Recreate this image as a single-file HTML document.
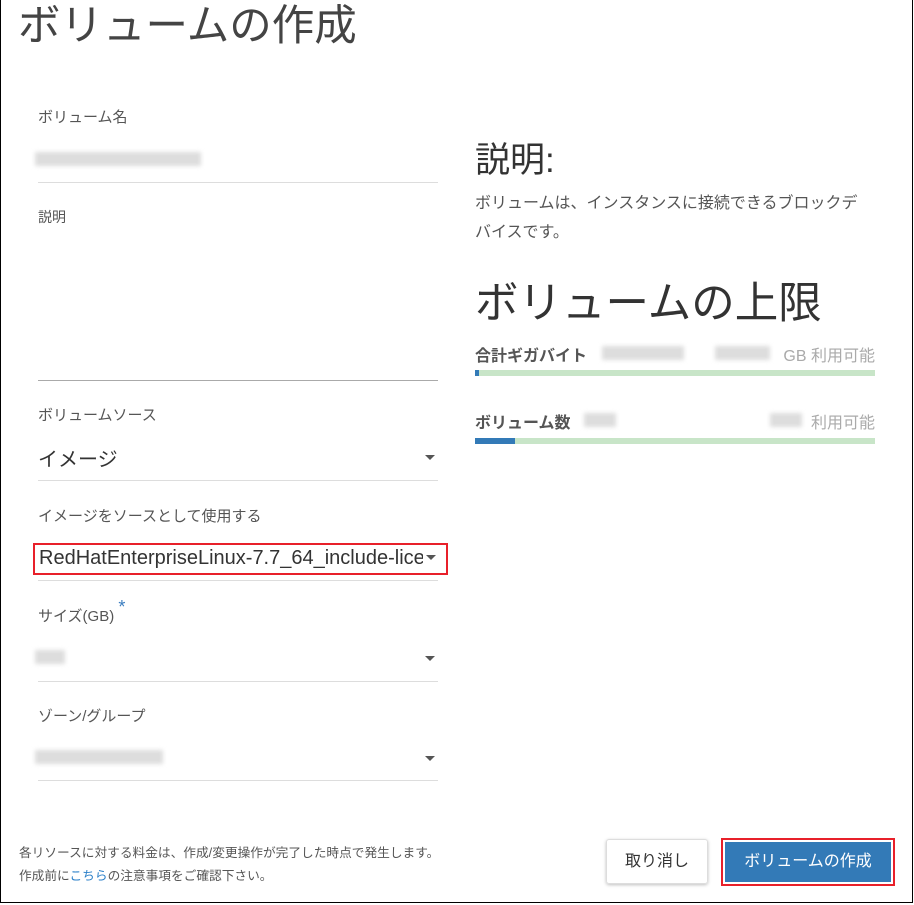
<!DOCTYPE html>
<html><head><meta charset="utf-8"><style>
body{margin:0;width:914px;height:905px;position:relative;overflow:hidden;background:#fff;font-family:"Liberation Sans","Noto Sans CJK JP",sans-serif;color:#333}
.frame{position:absolute;left:0;top:0;width:911px;height:902px;border:1px solid #000;border-top:none}
.a{position:absolute;white-space:nowrap}
.lbl{font-size:15px;color:#555}
.line{position:absolute;left:38px;width:400px;height:1px;background:#ddd}
.val{font-size:20px;color:#333}
.caret{position:absolute;left:425px;width:0;height:0;border-left:5px solid transparent;border-right:5px solid transparent;border-top:5px solid #555}
.blur{position:absolute;background:#ddd;filter:blur(2px)}
.bar{position:absolute;left:475px;width:400px;height:6px;background:#c8e5c8}
</style></head><body>
<div class="frame"></div>
<div class="a" style="left:18px;top:-8px;font-size:42.5px;color:#444">ボリュームの作成</div>
<div class="a lbl" style="left:38px;top:106px">ボリューム名</div>
<div class="blur" style="left:35px;top:152px;width:166px;height:14px"></div>
<div class="line" style="top:182px"></div>
<div class="a lbl" style="left:38px;top:207px;font-size:14px">説明</div>
<div style="position:absolute;left:38px;top:237px;width:400px;height:143px;border-bottom:1px solid #aaa"></div>
<div class="a lbl" style="left:38px;top:404px">ボリュームソース</div>
<div class="a val" style="left:38px;top:443px">イメージ</div>
<div class="caret" style="top:455px"></div>
<div class="line" style="top:480px"></div>
<div class="a lbl" style="left:38px;top:505px">イメージをソースとして使用する</div>
<div style="position:absolute;left:33px;top:543px;width:411px;height:28px;border:2px solid #e8202a;overflow:hidden">
<div class="a val" style="left:4px;top:2px;font-size:20px">RedHatEnterpriseLinux-7.7_64_include-license</div>
<div style="position:absolute;left:388px;top:0;width:23px;height:28px;background:#fff"></div>
<div class="caret" style="left:391px;top:10px"></div></div>
<div class="line" style="top:580px"></div>
<div class="a lbl" style="left:38px;top:605px">サイズ(GB) <span style="color:#3a7dc0;font-size:18px;position:relative;top:-8px">*</span></div>
<div class="blur" style="left:35px;top:650px;width:30px;height:14px"></div>
<div class="caret" style="top:656px"></div>
<div class="line" style="top:681px"></div>
<div class="a lbl" style="left:38px;top:705px">ゾーン/グループ</div>
<div class="blur" style="left:35px;top:750px;width:128px;height:14px"></div>
<div class="caret" style="top:756px"></div>
<div class="line" style="top:780px"></div>
<div class="a" style="left:475px;top:132px;font-size:35px;color:#333">説明:</div>
<div class="a" style="left:475px;top:189px;font-size:16px;color:#555;line-height:29px;white-space:normal;width:395px">ボリュームは、インスタンスに接続できるブロックデバイスです。</div>
<div class="a" style="left:475px;top:268px;font-size:43.5px;color:#333">ボリュームの上限</div>
<div class="a" style="left:475px;top:342px;font-size:16px;font-weight:bold;color:#555">合計ギガバイト</div>
<div class="blur" style="left:602px;top:346px;width:82px;height:14px"></div>
<div class="blur" style="left:715px;top:346px;width:55px;height:14px"></div>
<div class="a" style="right:39px;top:342px;font-size:16px;color:#aaa">GB 利用可能</div>
<div class="bar" style="top:370px"></div><div class="bar" style="top:370px;width:4px;background:#337ab7"></div>
<div class="a" style="left:475px;top:409px;font-size:16px;font-weight:bold;color:#555">ボリューム数</div>
<div class="blur" style="left:584px;top:413px;width:32px;height:14px"></div>
<div class="blur" style="left:770px;top:413px;width:32px;height:14px"></div>
<div class="a" style="right:39px;top:409px;font-size:16px;color:#aaa">利用可能</div>
<div class="bar" style="top:438px"></div><div class="bar" style="top:438px;width:40px;background:#337ab7"></div>
<div class="a" style="left:19px;top:842px;font-size:12.7px;color:#555">各リソースに対する料金は、作成/変更操作が完了した時点で発生します。</div>
<div class="a" style="left:19px;top:865px;font-size:12.7px;color:#555">作成前に<span style="color:#2a7fc8">こちら</span>の注意事項をご確認下さい。</div>
<div style="position:absolute;left:606px;top:839px;width:100px;height:43px;border:1px solid #ddd;border-radius:3px;box-shadow:0 1px 3px rgba(0,0,0,.25);font-size:16px;color:#333;text-align:center;line-height:43px">取り消し</div>
<div style="position:absolute;left:721px;top:838px;width:170px;height:44px;border:2px solid #e8202a;background:#fff"><div style="position:absolute;left:2px;top:2px;right:2px;bottom:2px;background:#337ab7;color:#fff;font-size:16px;text-align:center;line-height:40px">ボリュームの作成</div></div>
</body></html>
